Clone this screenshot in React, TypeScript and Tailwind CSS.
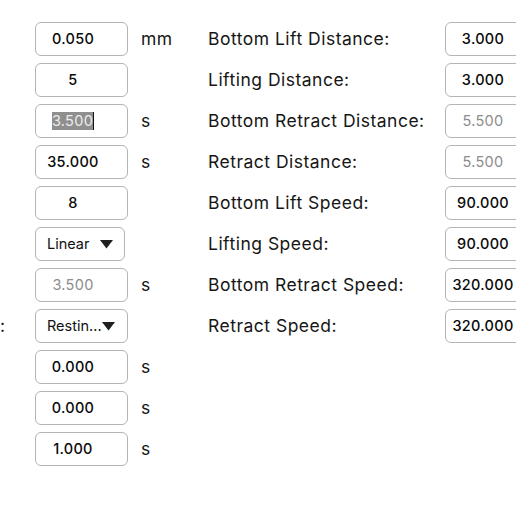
import React from 'react';

type Field = { value: string; unit?: string; dim?: boolean; selected?: boolean; select?: boolean; narrow?: boolean; label?: string };

const leftFields: Field[] = [
  { value: '0.050', unit: 'mm' },
  { value: '5' },
  { value: '3.500', unit: 's', selected: true },
  { value: '35.000', unit: 's' },
  { value: '8' },
  { value: 'Linear', select: true, narrow: true },
  { value: '3.500', unit: 's', dim: true },
  { value: 'Restin...', select: true, label: ':' },
  { value: '0.000', unit: 's' },
  { value: '0.000', unit: 's' },
  { value: '1.000', unit: 's' },
];

const rightFields: { label: string; value: string; dim?: boolean }[] = [
  { label: 'Bottom Lift Distance:', value: '3.000' },
  { label: 'Lifting Distance:', value: '3.000' },
  { label: 'Bottom Retract Distance:', value: '5.500', dim: true },
  { label: 'Retract Distance:', value: '5.500', dim: true },
  { label: 'Bottom Lift Speed:', value: '90.000' },
  { label: 'Lifting Speed:', value: '90.000' },
  { label: 'Bottom Retract Speed:', value: '320.000' },
  { label: 'Retract Speed:', value: '320.000' },
];

const Caret = () => (
  <svg width="13" height="9" viewBox="0 0 13 9" className="shrink-0">
    <path d="M0 0 H13 L6.5 8.5 Z" fill="#1f1f1f" />
  </svg>
);

const NumBox = ({ value, dim, selected }: { value: string; dim?: boolean; selected?: boolean }) => (
  <div className="w-[93px] h-[34px] shrink-0 border border-[#b4b4b4] rounded-[6px] bg-white flex items-center justify-center pr-[17px] text-[14.5px] tracking-[0.02em]">
    {selected ? (
      <span className="flex items-center">
        <span className="bg-[#8f8f8f] text-[#ececec] leading-[18px]">{value}</span>
        <span className="w-px h-[18px] bg-[#111]" />
      </span>
    ) : (
      <span className={dim ? 'text-[#8c8c8c]' : 'text-[#0a0a0a] font-[450]'}>{value}</span>
    )}
  </div>
);

const SelectBox = ({ value, narrow }: { value: string; narrow?: boolean }) => (
  <div
    className={`${narrow ? 'w-[90px] pr-[11px]' : 'w-[93px] pr-[13px]'} h-[34px] shrink-0 border border-[#b4b4b4] rounded-[6px] bg-white flex items-center justify-between pl-[11px] text-[14.5px] text-[#111]`}
  >
    <span>{value}</span>
    <Caret />
  </div>
);

export default function App() {
  return (
    <div
      className="w-[516px] h-[516px] overflow-hidden bg-white flex pt-[22px] text-[#161616]"
      style={{ fontFamily: 'Inter, "Noto Sans", sans-serif' }}
    >
      {/* left column */}
      <div className="flex flex-col gap-[7px]">
        {leftFields.map((f, i) => (
          <div key={i} className="flex items-center h-[34px]">
            <div className="w-[35px] shrink-0 text-[17.5px]">{f.label ?? ''}</div>
            {f.select ? <SelectBox value={f.value} narrow={f.narrow} /> : <NumBox value={f.value} dim={f.dim} selected={f.selected} />}
            <div className="w-[80px] shrink-0 pl-[13px] text-[17.5px] tracking-[0.03em]">{f.unit ?? ''}</div>
          </div>
        ))}
      </div>
      {/* right column */}
      <div className="flex flex-col gap-[7px]">
        {rightFields.map((f, i) => (
          <div key={i} className="flex items-center h-[34px]">
            <div className="w-[237px] shrink-0 text-[17.5px] tracking-[0.028em] whitespace-nowrap">{f.label}</div>
            <NumBox value={f.value} dim={f.dim} />
          </div>
        ))}
      </div>
    </div>
  );
}
